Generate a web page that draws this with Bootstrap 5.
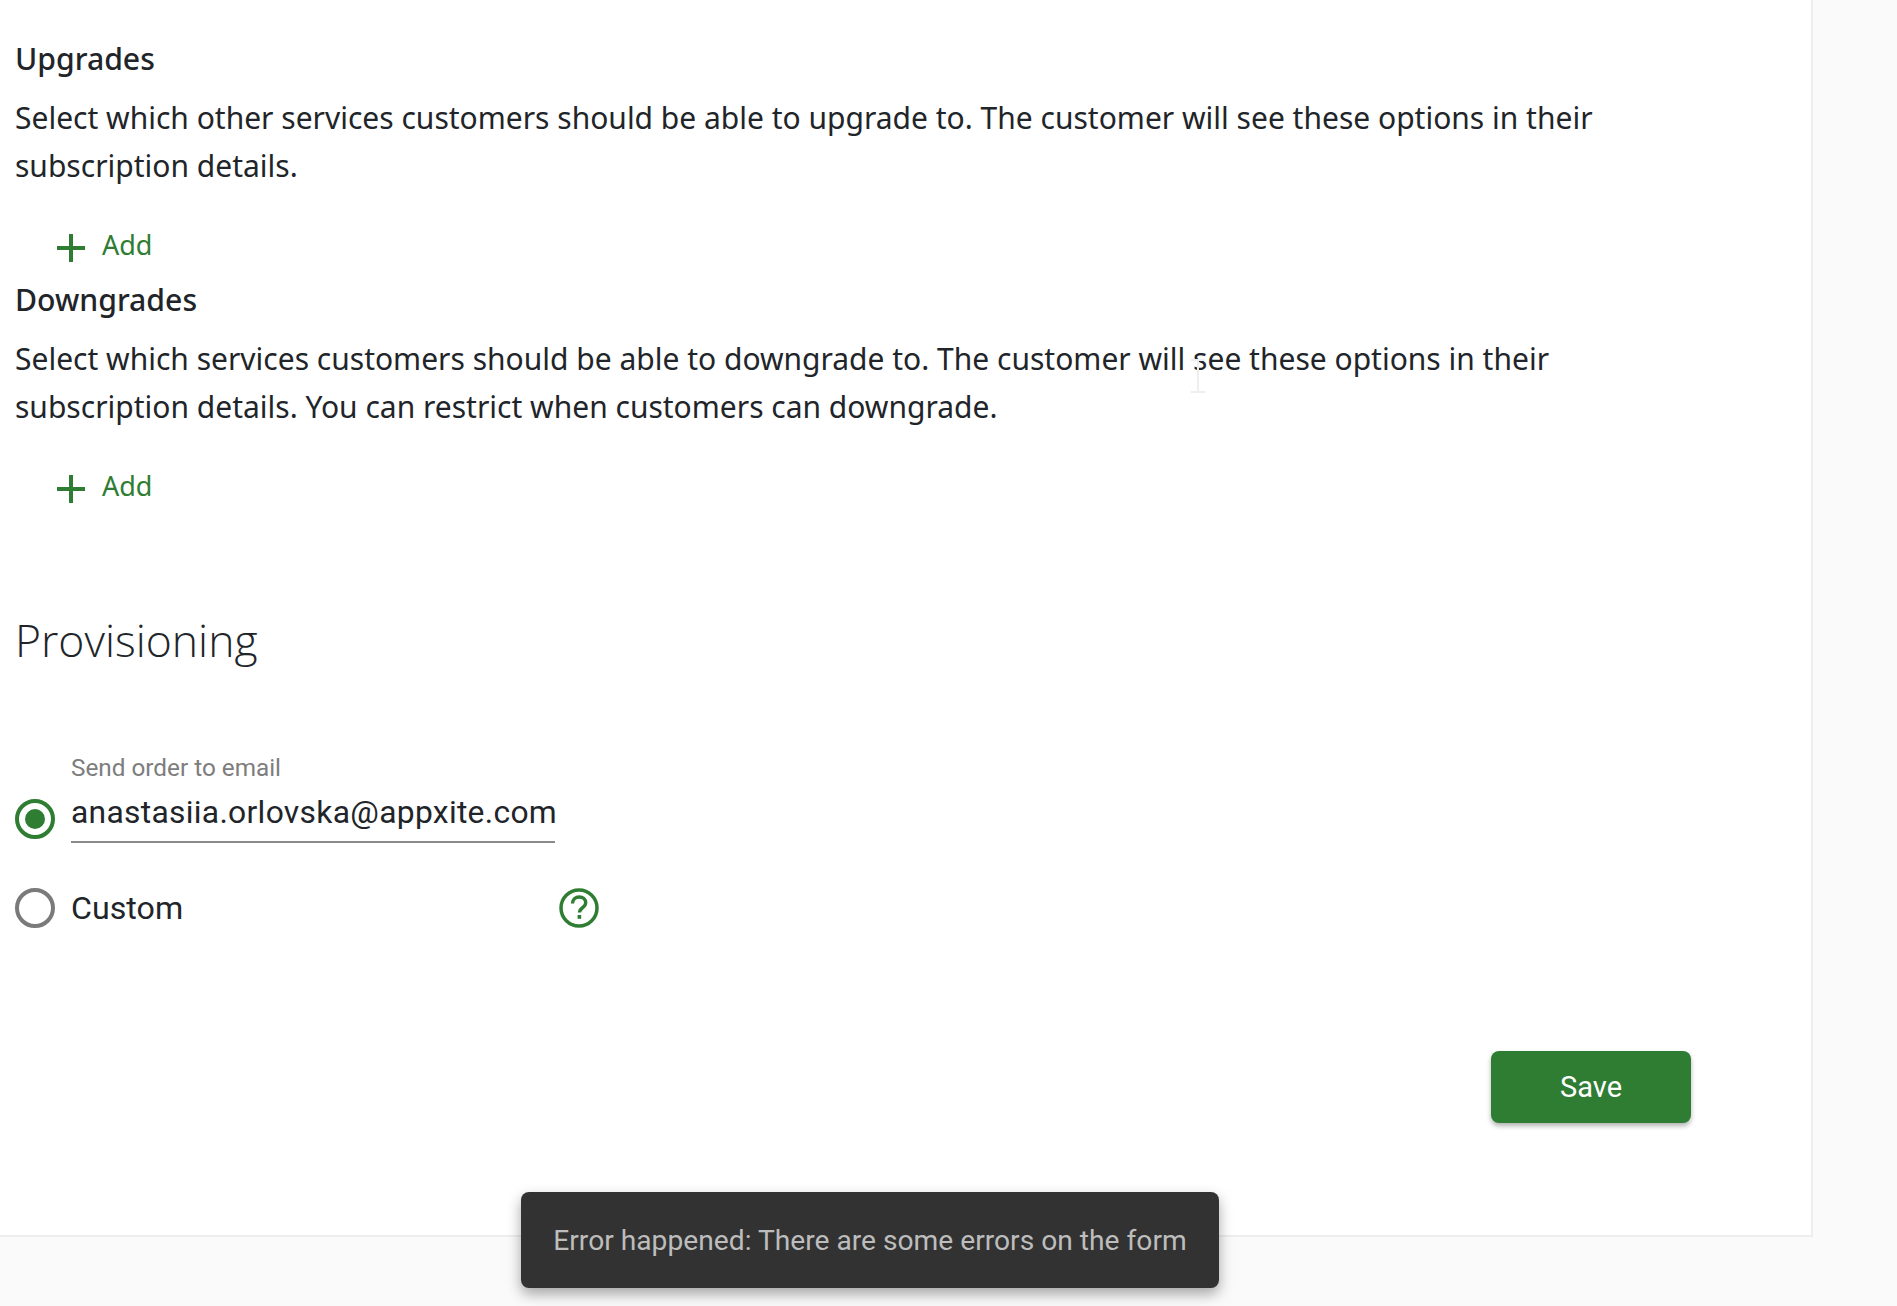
<!DOCTYPE html>
<html lang="en">
<head>
<meta charset="utf-8">
<title>Provisioning</title>
<link href="https://cdn.jsdelivr.net/npm/bootstrap@5.3.0/dist/css/bootstrap.min.css" rel="stylesheet">
<style>
html,body{height:100%;margin:0}
body{background:#fafafa;overflow:hidden;position:relative;color:#212529;font-family:"Noto Sans","Open Sans",sans-serif}
.sheet{width:1813px;height:1237px;background:#fff;border-right:2px solid #eee;border-bottom:2px solid #eee;padding:38px 15px 0;position:relative}
.sub-title{font-size:30.200px;line-height:42px;font-weight:500;margin:0 0 13.500px}
.sub-text{font-size:30px;line-height:48px;margin:0;width:1620px}
.add-link{display:flex;align-items:center;gap:16px;color:#2e7d32;font-size:27px;line-height:36px;padding:0 0 0 41px;margin:37.500px 0 0;background:none;border:0;height:36px}
.add-link svg{position:relative;top:3px}
.sub-block{margin-bottom:16px}
.sect-title{font-family:"Open Sans",sans-serif;font-weight:300;font-size:44.500px;line-height:60px;margin:106px 0 0}
.rb{width:40px;height:40px;border-radius:50%;border:4px solid #7a7a7a;flex:none;display:flex;align-items:center;justify-content:center;background:#fff}
.rb.on{border-color:#2e7d32;margin-bottom:2px}
.rb.on span{width:20px;height:20px;border-radius:50%;background:#2e7d32}
.email-row{display:flex;align-items:flex-end;gap:16px;margin-top:83px}
.field{width:484px;font-family:Roboto,sans-serif;border-bottom:2px solid #8a8a8a;padding-bottom:9px;margin-bottom:-2px}
.field label{display:block;font-size:24.300px;line-height:30px;color:#7d7d7d;margin-bottom:8.500px}
.field div{font-size:31.800px;line-height:40px;color:#212529;white-space:nowrap;letter-spacing:.3px}
.custom-row{display:flex;align-items:center;gap:16px;margin-top:43px;font-family:Roboto,sans-serif;font-size:32.200px}
.custom-row .lbl{width:472px}
.actions{display:flex;justify-content:flex-end;margin-top:119px;padding-right:105px}
.save-btn{width:200px;height:72px;background:#2e7d32;border:0;color:#fff;font-family:Roboto,sans-serif;font-weight:400;font-size:29px;padding-top:3px;border-radius:8px;box-shadow:0 3px 5px rgba(0,0,0,.3)}
.snack{position:absolute;left:521px;top:1192px;width:698px;height:96px;background:#323232;color:#bdbdbd;border-radius:8px;font-family:Roboto,sans-serif;font-size:28.200px;padding-top:2px;display:flex;align-items:center;justify-content:center;white-space:nowrap;box-shadow:0 6px 14px rgba(0,0,0,.35)}
.caret-ghost{position:absolute;left:1188px;top:358px}
</style>
</head>
<body>
<main class="sheet">
  <section class="sub-block">
    <h3 class="sub-title">Upgrades</h3>
    <p class="sub-text">Select which other services customers should be able to upgrade to. The customer will see these options in their subscription details.</p>
    <button class="add-link" type="button"><svg width="30" height="30" viewBox="0 0 30 30"><path d="M15 1v28M1 15h28" stroke="#2e7d32" stroke-width="4"/></svg>Add</button>
  </section>
  <section class="sub-block">
    <h3 class="sub-title">Downgrades</h3>
    <p class="sub-text">Select which services customers should be able to downgrade to. The customer will see these options in their subscription details. You can restrict when customers can downgrade.</p>
    <button class="add-link" type="button"><svg width="30" height="30" viewBox="0 0 30 30"><path d="M15 1v28M1 15h28" stroke="#2e7d32" stroke-width="4"/></svg>Add</button>
  </section>
  <h2 class="sect-title">Provisioning</h2>
  <div class="email-row">
    <span class="rb on"><span></span></span>
    <div class="field"><label>Send order to email</label><div>anastasiia.orlovska@appxite.com</div></div>
  </div>
  <div class="custom-row">
    <span class="rb"></span><span class="lbl">Custom</span>
    <svg width="40" height="40" viewBox="0 0 40 40"><circle cx="20" cy="20" r="18" fill="none" stroke="#2e7d32" stroke-width="3.500"/><path d="M13.500 15.500c0-4 3-6.500 6.700-6.500 3.800 0 6.500 2.400 6.500 5.700 0 4.800-6.200 5-6.200 9.800" fill="none" stroke="#2e7d32" stroke-width="3.400"/><rect x="18.600" y="27" width="3.600" height="3.800" fill="#2e7d32"/></svg>
  </div>
  <div class="actions"><button class="save-btn" type="button">Save</button></div>
</main>
<svg class="caret-ghost" width="20" height="36" viewBox="0 0 20 36"><path d="M3 2h14M10 2v32M3 34h14" stroke="#eeeeee" stroke-width="2" fill="none"/></svg>
<div class="snack">Error happened: There are some errors on the form</div>
<script src="https://cdn.jsdelivr.net/npm/bootstrap@5.3.0/dist/js/bootstrap.bundle.min.js"></script>
</body>
</html>
